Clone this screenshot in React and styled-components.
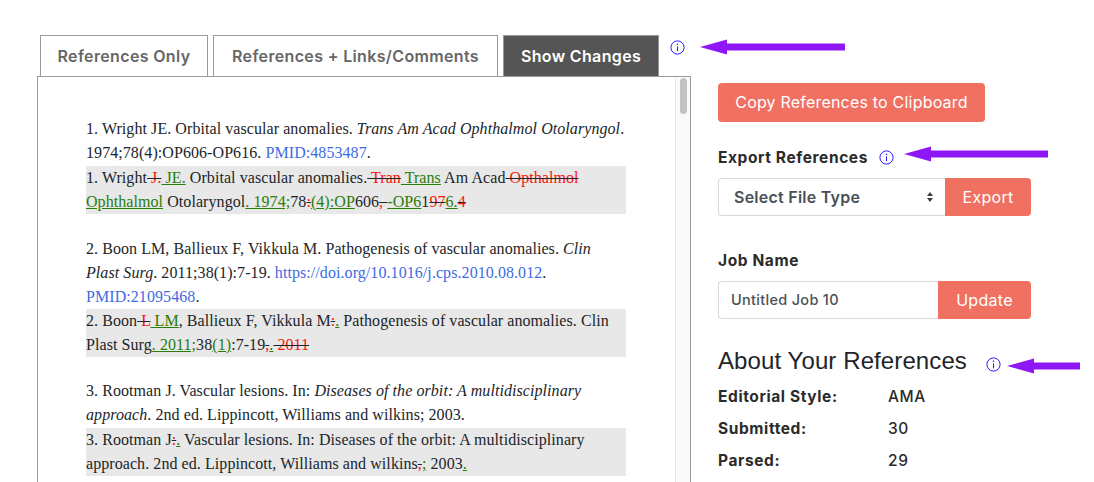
import React from "react";
import styled, { createGlobalStyle } from "styled-components";

const GlobalStyle = createGlobalStyle`
  html, body {
    margin: 0;
    padding: 0;
    background: #fff;
    overflow: hidden;
  }
  * {
    box-sizing: border-box;
  }
`;

const SANS = `"Inter", "Open Sans", "Liberation Sans", sans-serif`;
const CORAL = "#f07162";

const Page = styled.div`
  display: flex;
  width: 1094px;
  height: 482px;
  overflow: hidden;
  padding: 35px 0 0 37px;
  font-family: ${SANS};
`;

const LeftColumn = styled.div`
  width: 654px;
  flex-shrink: 0;
`;

const TabRow = styled.div`
  display: flex;
  align-items: flex-start;
  padding-left: 3px;
  height: 41px;
`;

const Tab = styled.div`
  flex-shrink: 0;
  white-space: nowrap;
  height: 42px;
  width: ${(p) => p.$width}px;
  margin-right: 5px;
  border: 1px solid #999;
  display: flex;
  align-items: center;
  justify-content: center;
  font-size: 16px;
  font-weight: 600;
  letter-spacing: 0.35px;
  color: ${(p) => (p.$active ? "#fff" : "#666")};
  background: ${(p) => (p.$active ? "#555" : "#fff")};
  position: relative;
  z-index: 1;
`;

const TabNote = styled.div`
  display: flex;
  flex-shrink: 0;
  align-items: center;
  height: 24px;
  margin-left: 6px;
  gap: 15px;
`;

const Panel = styled.div`
  display: flex;
  height: 420px;
  border: 1px solid #999;
  border-bottom: 0;
`;

const Document = styled.div`
  flex: 1;
  padding: 41px 49px 0 48px;
  font-family: "Liberation Serif", "Times New Roman", serif;
  font-size: 16px;
  line-height: 24px;
  letter-spacing: 0.07px;
  color: #212529;
`;

const Entry = styled.div`
  margin-bottom: 23px;
`;

const Original = styled.div`
  margin-top: -1px;
  margin-bottom: 1px;
`;

const Compared = styled.div`
  background: #e8e8e8;
`;

const Link = styled.span`
  color: #3f6be0;
`;

const Del = styled.span`
  color: #f8150d;
  text-decoration: line-through;
  text-decoration-color: #212529;
`;

const Ins = styled.span`
  color: #2a7d0a;
  text-decoration: underline;
`;

const ScrollTrack = styled.div`
  width: 15px;
  flex-shrink: 0;
  padding: 1px 3px 0 4px;
  background: #fafafa;
  border-left: 1px solid #e8e8e8;
`;

const ScrollThumb = styled.div`
  height: 36px;
  border-radius: 4px;
  background: #c2c2c2;
`;

const Sidebar = styled.div`
  padding: 48px 0 0 27px;
  flex: 1;
`;

const CopyButton = styled.div`
  width: 267px;
  height: 39px;
  padding-bottom: 2px;
  border-radius: 4px;
  background: ${CORAL};
  color: #fff;
  font-size: 16px;
  letter-spacing: 0.2px;
  display: flex;
  align-items: center;
  justify-content: center;
`;

const Label = styled.div`
  display: flex;
  align-items: center;
  height: 24px;
  font-size: 15.5px;
  font-weight: 700;
  letter-spacing: 0.6px;
  color: #2b2b2b;
`;

const ExportLabel = styled(Label)`
  margin-top: 23px;
  margin-bottom: 9px;
`;

const JobLabel = styled(Label)`
  margin-top: 32px;
  margin-bottom: 9px;
`;

const Field = styled.div`
  display: flex;
  width: 313px;
  height: 38px;
`;

const FakeSelect = styled.div`
  flex: 1;
  border: 1px solid #d8d8d8;
  border-right: 0;
  border-radius: 4px 0 0 4px;
  padding: 0 11px 0 15px;
  display: flex;
  align-items: center;
  justify-content: space-between;
  font-size: 16px;
  font-weight: 600;
  letter-spacing: 0.25px;
  color: #495057;
`;

const NameInput = styled.input`
  flex: 1;
  min-width: 0;
  border: 1px solid #d8d8d8;
  border-right: 0;
  border-radius: 4px 0 0 4px;
  padding: 0 0 2px 12px;
  font-family: ${SANS};
  font-size: 14.5px;
  font-weight: 500;
  letter-spacing: 0.3px;
  color: #495057;
  outline: none;
`;

const FieldButton = styled.div`
  width: ${(p) => p.$width}px;
  background: ${CORAL};
  border-radius: 0 4px 4px 0;
  color: #fff;
  font-size: 16px;
  letter-spacing: 0.3px;
  display: flex;
  align-items: center;
  justify-content: center;
`;

const AboutHeading = styled.div`
  display: flex;
  align-items: center;
  margin-top: 25px;
  height: 34px;
  font-family: "Liberation Sans", Arial, sans-serif;
  font-size: 24px;
  letter-spacing: 0.1px;
  color: #212529;
`;

const StatRow = styled.div`
  display: flex;
  align-items: center;
  height: 32px;
  font-size: 15.5px;
  font-weight: 700;
  letter-spacing: 0.6px;
  color: #2b2b2b;
`;

const StatRows = styled.div`
  margin-top: 2px;
`;

const StatName = styled.div`
  width: 170px;
`;

const StatValue = styled.div`
  font-weight: 500;
`;

const InfoGap = styled.span`
  display: inline-flex;
  align-items: center;
  margin-left: ${(p) => p.$left}px;
  gap: ${(p) => p.$gap}px;
  letter-spacing: 0;
`;

const IconSvg = styled.svg`
  flex-shrink: 0;
  margin-top: ${(p) => p.$drop || 0}px;
`;

const ArrowSvg = styled.svg`
  flex-shrink: 0;
  margin-top: ${(p) => p.$drop || 0}px;
  margin-bottom: ${(p) => p.$rise || 0}px;
`;

const InfoIcon = ({ drop }) => (
  <IconSvg $drop={drop} width="15" height="15" viewBox="0 0 15 15" fill="none">
    <circle cx="7.5" cy="7.5" r="6.6" stroke="#2a1cff" strokeWidth="1" />
    <circle cx="7.5" cy="4.3" r="0.8" fill="#2a1cff" />
    <path d="M7.5 6.4v4.8" stroke="#2a1cff" strokeWidth="1.1" />
  </IconSvg>
);

const Arrow = ({ width, drop, rise }) => (
  <ArrowSvg
    $drop={drop}
    $rise={rise}
    width={width}
    height="16"
    viewBox={`0 0 ${width} 16`}
  >
    <path
      d={`M0 8 L27 0.5 V4.5 H${width} V11.5 H27 V15.5 Z`}
      fill="#8f17f5"
    />
  </ArrowSvg>
);

const SortCaret = () => (
  <svg width="8" height="12" viewBox="0 0 8 12">
    <path d="M4 1 L7 5 H1 Z M4 11 L1 7 H7 Z" fill="#3a3f45" />
  </svg>
);

export default function App() {
  return (
    <Page>
      <GlobalStyle />
      <LeftColumn>
        <TabRow>
          <Tab $width={168}>References Only</Tab>
          <Tab $width={285}>References + Links/Comments</Tab>
          <Tab $width={156} $active>
            Show Changes
          </Tab>
          <TabNote>
            <InfoIcon />
            <Arrow width={145} />
          </TabNote>
        </TabRow>
        <Panel>
          <Document>
            <Entry>
              <Original>
                1. Wright JE. Orbital vascular anomalies.{" "}
                <em>Trans Am Acad Ophthalmol Otolaryngol</em>.
                <br />
                1974;78(4):OP606-OP616. <Link>PMID:4853487</Link>.
              </Original>
              <Compared>
                1. Wright<Del> J.</Del>
                <Ins> JE.</Ins> Orbital vascular anomalies.<Del> Tran</Del>
                <Ins> Trans</Ins> Am Acad<Del> Opthalmol</Del>
                <br />
                <Ins>Ophthalmol</Ins> Otolaryngol<Ins>. 1974;</Ins>78
                <Del>:</Del>
                <Ins>(4):OP</Ins>606<Del>, </Del>
                <Ins>-OP6</Ins>1<Del>97</Del>
                <Ins>6.</Ins>
                <Del>4</Del>
              </Compared>
            </Entry>
            <Entry>
              <div>
                2. Boon LM, Ballieux F, Vikkula M. Pathogenesis of vascular
                anomalies. <em>Clin</em>
                <br />
                <em>Plast Surg</em>. 2011;38(1):7-19.{" "}
                <Link>https://doi.org/10.1016/j.cps.2010.08.012</Link>.
                <br />
                <Link>PMID:21095468</Link>.
              </div>
              <Compared>
                2. Boon<Del> L</Del>
                <Ins> LM</Ins>, Ballieux F, Vikkula M<Del>:</Del>
                <Ins>.</Ins> Pathogenesis of vascular anomalies. Clin
                <br />
                Plast Surg<Ins>. 2011;</Ins>38<Ins>(1)</Ins>:7-19<Del>,</Del>
                <Ins>.</Ins>
                <Del> 2011</Del>
              </Compared>
            </Entry>
            <Entry>
              <Original>
                3. Rootman J. Vascular lesions. In:{" "}
                <em>Diseases of the orbit: A multidisciplinary</em>
                <br />
                <em>approach</em>. 2nd ed. Lippincott, Williams and wilkins;
                2003.
              </Original>
              <Compared>
                3. Rootman J<Del>:</Del>
                <Ins>.</Ins> Vascular lesions. In: Diseases of the orbit: A
                multidisciplinary
                <br />
                approach. 2nd ed. Lippincott, Williams and wilkins<Del>,</Del>
                <Ins>;</Ins> 2003<Ins>.</Ins>
              </Compared>
            </Entry>
          </Document>
          <ScrollTrack>
            <ScrollThumb />
          </ScrollTrack>
        </Panel>
      </LeftColumn>
      <Sidebar>
        <CopyButton>Copy References to Clipboard</CopyButton>
        <ExportLabel>
          Export References
          <InfoGap $left={11} $gap={10}>
            <InfoIcon />
            <Arrow width={144} rise={6} />
          </InfoGap>
        </ExportLabel>
        <Field>
          <FakeSelect>
            Select File Type
            <SortCaret />
          </FakeSelect>
          <FieldButton $width={86}>Export</FieldButton>
        </Field>
        <JobLabel>Job Name</JobLabel>
        <Field>
          <NameInput value="Untitled Job 10" readOnly />
          <FieldButton $width={93}>Update</FieldButton>
        </Field>
        <AboutHeading>
          About Your References
          <InfoGap $left={19} $gap={6}>
            <InfoIcon drop={6} />
            <Arrow width={73} drop={10} />
          </InfoGap>
        </AboutHeading>
        <StatRows>
          <StatRow>
            <StatName>Editorial Style:</StatName>
            <StatValue>AMA</StatValue>
          </StatRow>
          <StatRow>
            <StatName>Submitted:</StatName>
            <StatValue>30</StatValue>
          </StatRow>
          <StatRow>
            <StatName>Parsed:</StatName>
            <StatValue>29</StatValue>
          </StatRow>
        </StatRows>
      </Sidebar>
    </Page>
  );
}
